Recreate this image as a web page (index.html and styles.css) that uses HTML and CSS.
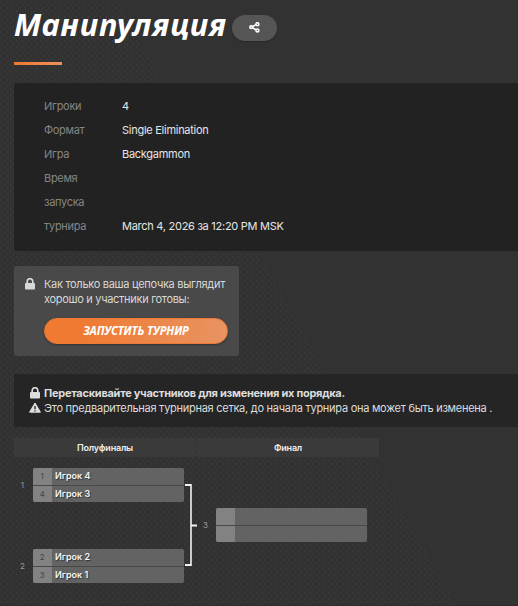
FILE: index.html
```html
<!DOCTYPE html>
<html lang="ru">
<head>
<meta charset="utf-8">
<title>Манипуляция</title>
<link rel="stylesheet" href="styles.css">
</head>
<body>
<svg class="texture" width="518" height="606" aria-hidden="true">
  <defs><pattern id="dots" width="6" height="6" patternUnits="userSpaceOnUse"><path d="M1 1h1v2h-1zM4 4h1v2h-1z" fill="#3b3b3b"/></pattern></defs>
  <path d="M0 0H118L456 606H0z" fill="url(#dots)"/>
</svg>
<main class="page">
  <header class="heading">
    <h1 class="title">Манипуляция</h1>
    <button class="share" aria-label="Поделиться"><svg width="11" height="11" viewBox="0 0 11 11" fill="none" stroke="#fff" stroke-width="1.6"><path d="M3.6 4.6L6.8 2.6M3.6 5.8L6.8 7.8"/><circle cx="2.2" cy="5.2" r="1.35"/><circle cx="8.4" cy="2.2" r="1.45"/><circle cx="8.4" cy="8.4" r="1.45"/></svg></button>
  </header>
  <div class="accent"></div>
  <dl class="details">
    <dt>Игроки</dt><dd>4</dd>
    <dt>Формат</dt><dd>Single Elimination</dd>
    <dt>Игра</dt><dd>Backgammon</dd>
    <dt>Время запуска турнира</dt><dd>March 4, 2026 за 12:20 PM MSK</dd>
  </dl>
  <section class="launch">
    <svg class="launch-lock" width="10" height="12" viewBox="0 0 10 12"><path d="M2.2 6V3.5a2.8 2.8 0 0 1 5.6 0V6" fill="none" stroke="#d8d8d8" stroke-width="1.7"/><rect y="5" width="10" height="6.5" rx="1" fill="#d8d8d8"/></svg>
    <div class="launch-body">
      <p class="launch-text">Как только ваша цепочка выглядит<br>хорошо и участники готовы:</p>
      <button class="start">ЗАПУСТИТЬ ТУРНИР</button>
    </div>
  </section>
  <section class="notice">
    <p class="notice-row strong"><svg width="12" height="12" viewBox="0 0 12 12"><path d="M3.2 6V3.5a2.8 2.8 0 0 1 5.6 0V6" fill="none" stroke="#ddd" stroke-width="1.7"/><rect x="1" y="5" width="10" height="6.5" rx="1" fill="#ddd"/></svg><span>Перетаскивайте участников для изменения их порядка.</span></p>
    <p class="notice-row"><svg width="12" height="12" viewBox="0 0 12 12"><path d="M6 1.3L11.2 10.1H.8z" fill="#ddd" stroke="#ddd" stroke-width="1.2" stroke-linejoin="round"/><path d="M5.3 4h1.4v3.3H5.3zM5.3 8.2h1.4v1.4H5.3z" fill="#333"/></svg><span>Это предварительная турнирная сетка, до начала турнира она может быть изменена .</span></p>
  </section>
  <section class="rounds"><div>Полуфиналы</div><div>Финал</div></section>
  <section class="bracket">
    <div class="round">
      <div class="match"><span class="id">1</span><div class="pair"><div class="slot"><i>1</i><b>Игрок 4</b></div><div class="slot"><i>4</i><b>Игрок 3</b></div></div></div>
      <div class="match"><span class="id">2</span><div class="pair"><div class="slot"><i>2</i><b>Игрок 2</b></div><div class="slot"><i>3</i><b>Игрок 1</b></div></div></div>
    </div>
    <svg class="connector" width="13" height="115" viewBox="0 0 13 115" fill="none" stroke="#f2f2f2"><path d="M1 17H7M1 97H7M7 57.5H13" stroke-width="2"/><path d="M7 16V98" stroke-width="1.6"/></svg>
    <div class="final"><span class="id">3</span><div class="pair"><div class="slot"><i></i><b></b></div><div class="slot"><i></i><b></b></div></div></div>
  </section>
</main>
<div class="bottom-edge"></div>
</body>
</html>
```
FILE: styles.css
```css
* { box-sizing: border-box; }
body { margin: 0; width: 518px; height: 606px; overflow: hidden; background: #323232; color: #eee; font-family: Inter, "Liberation Sans", sans-serif; font-size: 11px; letter-spacing: -0.27px; }
h1, p, dl, dd { margin: 0; }
button { border: 0; padding: 0; font: inherit; color: #fff; }
svg { display: block; flex: none; }
.texture { position: absolute; top: 0; left: 0; }
.page { position: relative; padding-left: 14px; }
.heading { height: 62px; display: flex; align-items: flex-start; }
.title { width: 218px; font: italic 700 31px/48px "Noto Sans", sans-serif; letter-spacing: 0.85px; color: #fff; white-space: nowrap; }
.share { width: 45px; height: 26px; margin-top: 15px; border-radius: 13px; background: #555; display: flex; align-items: center; justify-content: center; padding-bottom: 1px; box-shadow: 0 1px 1px #292929; }
.accent { width: 48px; height: 3px; background: linear-gradient(90deg, #f07830, #ed905b); }
.details { margin-top: 18px; height: 168px; padding: 11px 30px; border-radius: 3px 0 0 3px; background: #222; display: grid; grid-template-columns: 50px 1fr; column-gap: 28px; align-items: end; align-content: start; line-height: 24px; }
.details dt { color: #858585; letter-spacing: -0.3px; }
.details dd { color: #e6e6e6; }
.launch { margin-top: 15px; width: 225px; height: 90px; border-radius: 2px; background: #494949; display: flex; padding: 12px 11px; gap: 9px; }
.launch-text { margin-top: -1px; font-size: 11px; line-height: 15px; letter-spacing: -0.3px; color: #d8d8d8; white-space: nowrap; }
.start { display: block; width: 184px; height: 26px; margin-top: 11px; border-radius: 13px; background: linear-gradient(100deg, #f07a30 20%, #e89464); border: 1px solid #ec7936; font: italic 700 11.5px/24px "Noto Sans", sans-serif; letter-spacing: -0.1px; text-align: center; box-shadow: 0 1px 2px #333; }
.notice { margin-top: 18px; height: 53px; padding: 12px 15px; background: #252525; color: #ddd; }
.notice-row { height: 15px; line-height: 15px; display: flex; align-items: center; gap: 3px; white-space: nowrap; }
.notice-row svg { margin-top: -1px; }
.strong { font-weight: 700; }
.rounds { width: 365px; margin-top: 11px; height: 19px; display: grid; grid-template-columns: 1fr 1fr; gap: 1px; font-size: 9px; line-height: 19px; font-weight: 600; letter-spacing: -0.2px; text-align: center; }
.rounds div { background: #3a3a3a; }
.bracket { display: flex; margin-top: 11px; height: 115px; letter-spacing: 0; }
.round { width: 170px; display: flex; flex-direction: column; justify-content: space-between; }
.match, .final { display: flex; align-items: center; }
.id { width: 19px; font-size: 8px; line-height: 10px; color: #999; text-align: center; padding-right: 2px; }
.pair { width: 150.5px; height: 34px; border-radius: 2px; overflow: hidden; display: flex; flex-direction: column; gap: 1px; background: #484848; }
.slot { flex: 1; display: flex; background: #636363; line-height: 16.5px; }
.slot i { width: 18.5px; background: #828282; font-style: normal; font-size: 8px; text-align: center; color: #444; }
.slot b { padding-left: 3.5px; font-size: 9px; font-weight: 600; color: #f4f4f4; text-shadow: 1px 1px 1px #333; }
.final { height: 34px; margin-top: 40px; }
.bottom-edge { position: absolute; left: 0; right: 0; bottom: 0; height: 1px; background: #302929; }
```
